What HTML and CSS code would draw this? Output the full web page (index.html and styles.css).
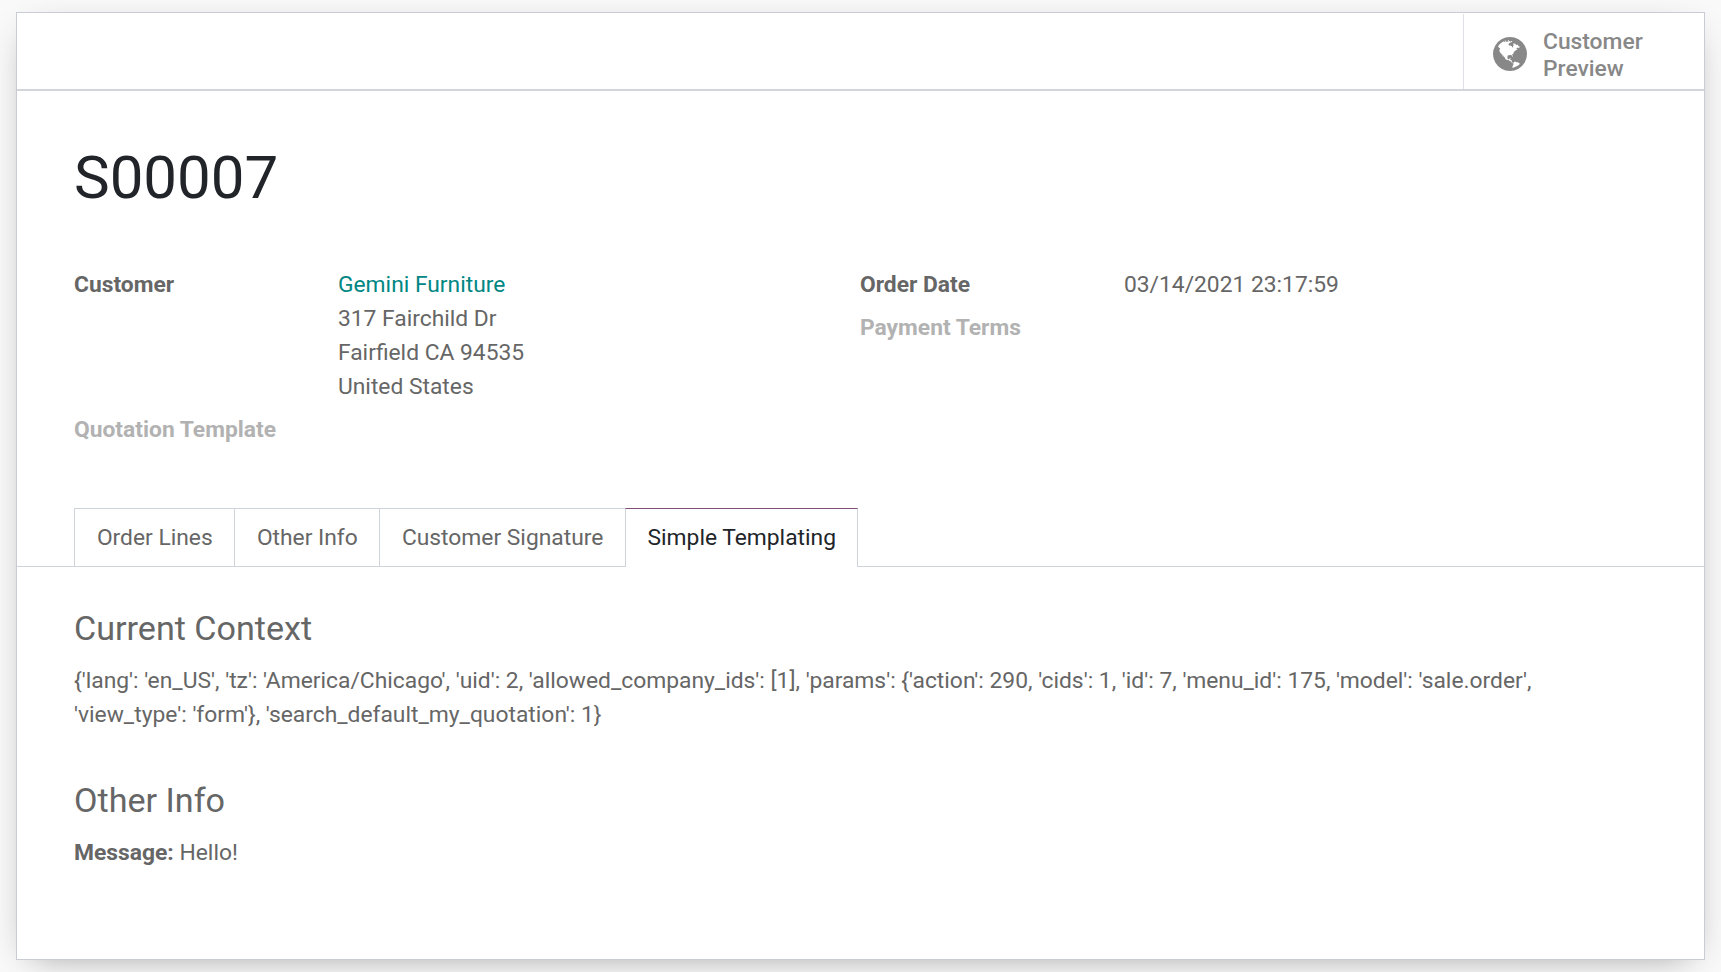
FILE: index.html
```html
<!DOCTYPE html>
<html lang="en">
<head>
<meta charset="utf-8">
<title>S00007</title>
<link rel="stylesheet" href="styles.css">
</head>
<body>
<main class="sheet">
  <div class="button-box">
    <button class="stat-button" type="button">
      <svg class="globe" viewBox="0 128 1536 1536" aria-hidden="true"><path fill="currentColor" d="M768 128q209 0 385.500 103t279.500 279.500 103 385.500-103 385.500-279.500 279.500-385.500 103-385.500-103-279.500-279.500-103-385.500 103-385.500 279.500-279.500 385.500-103zm274 521q-2 1-9.500 9.500t-13.500 9.500q2 0 4.500-5t5-11 3.500-7q6-7 22-15 14-6 52-12 34-8 51 11-2-2 9.500-13t14.500-12q3-2 15-4.500t15-7.500l2-22q-12 1-17.500-7t-6.500-21q0 2-6 8 0-7-4.500-8t-11.500 1-9 1q-10-3-15-7.500t-8-16.500-4-15q-2-5-9.500-11t-9.500-10q-1-2-2.500-5.500t-3-6.500-4-5.500-5.500-2.500-7 5-7.500 10-4.500 5q-3-2-6-1.500t-4.500 1-4.500 3-5 3.500q-3 2-8.500 3t-8.500 2q15-5-1-11-10-4-16-3 9-4 7.500-12t-8.500-14h5q-1-4-8.500-8.500t-17.500-8.500-13-6q-8-5-34-9.500t-33-.5q-5 6-4.500 10.500t4 14 3.500 12.500q1 6-5.500 13t-6.500 12q0 7 14 15.500t10 21.500q-3 8-16 16t-16 12q-5 8-1.500 18.500t10.500 16.500q2 2 1.500 4t-3.500 4.500-5.500 4-6.500 3.500l-3 2q-11 5-20.500-6t-13.500-26q-7-25-16-30-23-8-29 1-5-13-41-26-25-9-58-4 6-1 0-15-7-15-19-12 3-6 4-17.500t1-13.500q3-13 12-23 1-1 7-8.500t9.500-13.500.5-6q35 4 50-11 5-5 11.500-17t10.500-17q9-6 14-5.500t14.500 5.500 14.500 5q14 1 15.500-11t-7.500-20q12 1 3-17-4-7-8-9-12-4-27 5-8 4 2 8-1-1-9.500 10.500t-16.500 17.500-16-5q-1-1-5.500-13.500t-9.500-13.500q-8 0-16 15 3-8-11-15t-24-8q19-12-8-27-7-4-20.500-5t-19.500 4q-5 7-5.500 11.500t5 8 10.500 5.500 11.500 4 8.500 3q14 10 8 14-2 1-8.500 3.500t-11.500 4.500-6 4q-3 4 0 14t-2 14q-5-5-9-17.500t-7-16.500q7 9-25 6l-10-1q-4 0-16 2t-20.500 1-13.500-8q-4-8 0-20 1-4 4-2-4-3-11-9.500t-10-8.500q-46 15-94 41 6 1 12-1 5-2 13-6.500t10-5.500q34-14 42-7l5-5q14 16 20 25-7-4-30-1-20 6-22 12 7 12 5 18-4-3-11.500-10t-14.500-11-15-5q-16 0-22 1-146 80-235 222 7 7 12 8 4 1 5 9t2.500 11 11.500-3q9 8 3 19 1-1 44 27 19 17 21 21 3 11-10 18-1-2-9-9t-9-4q-3 5 .5 18.500t10.500 12.500q-7 0-9.500 16t-2.500 35.500-1 23.500l2 1q-3 12 5.500 34.500t21.500 19.500q-13 3 20 43 6 8 8 9 3 2 12 7.500t15 10 10 10.500q4 5 10 22.500t14 23.500q-2 6 9.500 20t10.500 23q-1 0-2.500 1t-2.500 1q3 7 15.500 14t15.500 13q1 3 2 10t3 11 8 2q2-20-24-62-15-25-17-29-3-5-5.500-15.500t-4.500-14.500q2 0 6 1.500t8.500 3.500 7.500 4 2 3q-3 7 2 17.500t12 18.500 17 19 12 13q6 6 14 19.500t0 13.500q9 0 20 10.500t17 19.500q5 8 8 26t5 24q2 7 8.500 13.500t12.500 9.500l16 8 13 7q5 2 18.500 10.500t21.500 11.500q10 4 16 4t14.500-2.500 13.500-3.500q15-2 29 15t21 21q36 19 55 11-2 1 .5 7.500t8 15.500 9 14.500 5.500 8.500q5 6 18 15t18 15q6-4 7-9-3 8 7 20t18 10q14-3 14-32-31 15-49-18 0-1-2.500-5.500t-4-8.500-2.500-8.500 0-7.500 5-3q9 0 10-3.500t-2-12.500-4-13q-1-8-11-20t-12-15q-5 9-16 8t-16-9q0 1-1.500 5.500t-1.500 6.500q-13 0-15-1 1-3 2.500-17.500t3.500-22.500q1-4 5.500-12t7.500-14.500 4-12.500-4.500-9.500-17.500-2.500q-19 1-26 20-1 3-3 10.500t-5 11.500-9 7q-7 3-24 2t-24-5q-13-8-22.500-29t-9.500-37q0-10 2.500-26.500t3-25-5.500-24.500q3-2 9-9.500t10-10.500q2-1 4.500-1.500t4.500 0 4-1.500 3-6q-1-1-4-3-3-3-4-3 7 3 28.500-1.500t27.500 1.500q15 11 22-2 0-1-2.500-9.500t-.5-13.500q5 27 29 9 3 3 15.500 5t17.500 5q3 2 7 5.500t5.500 4.500 5-.5 8.500-6.500q10 14 12 24 11 40 19 44 7 3 11 2t4.500-9.500 0-14-1.500-12.500l-1-8v-18l-1-8q-15-3-18.500-12t1.500-18.500 15-18.500q1-1 8-3.500t15.500-6.500 12.500-8q21-19 15-35 7 0 11-9-1 0-5-3t-7.500-5-4.500-2q9-5 2-16 5-3 7.500-11t7.500-10q9 12 21 2 8-8 1-16 5-7 20.500-10.500t18.500-9.500q7 2 8-2t1-12 3-12q4-5 15-9t13-5l17-11q3-4 0-4 18 2 31-11 10-11-6-20 3-6-3-9.500t-15-5.500q3-1 11.500-.5t10.500-1.500q15-10-7-16-17-5-43 12zm-163 877q206-36 351-189-3-3-12.500-4.500t-12.500-3.500q-18-7-24-8 1-7-2.500-13t-8-9-12.500-8-11-7q-2-2-7-6t-7-5.500-7.500-4.500-8.500-2-10 1l-3 1q-3 1-5.500 2.500t-5.500 3-4 3 0 2.500q-21-17-36-22-5-1-11-5.500t-10.500-7-10-1.500-11.500 7q-5 5-6 15t-2 13q-7-5 0-17.500t2-18.500q-3-6-10.500-4.500t-12 4.500-11.500 8.500-9 6.500-8.500 5.500-8.500 7.500q-3 4-6 12t-5 11q-2-4-11.500-6.500t-9.500-5.500q2 10 4 35t5 38q7 31-12 48-27 25-29 40-4 22 12 26 0 7-8 20.500t-7 21.500q0 6 2 16z"/></svg>
      <span class="stat-text">Customer<br>Preview</span>
    </button>
  </div>
  <h1 class="title">S00007</h1>
  <div class="groups">
    <dl class="group">
      <dt>Customer</dt>
      <dd><a class="partner">Gemini Furniture</a><br>317 Fairchild Dr<br>Fairfield CA 94535<br>United States</dd>
      <dt class="empty">Quotation Template</dt>
      <dd></dd>
    </dl>
    <dl class="group">
      <dt>Order Date</dt>
      <dd>03/14/2021 23:17:59</dd>
      <dt class="empty">Payment Terms</dt>
      <dd></dd>
    </dl>
  </div>
  <nav class="tabs">
    <a class="tab">Order Lines</a>
    <a class="tab">Other Info</a>
    <a class="tab">Customer Signature</a>
    <a class="tab active">Simple Templating</a>
  </nav>
  <section class="page">
    <h2>Current Context</h2>
    <p>{'lang': 'en_US', 'tz': 'America/Chicago', 'uid': 2, 'allowed_company_ids': [1], 'params': {'action': 290, 'cids': 1, 'id': 7, 'menu_id': 175, 'model': 'sale.order', 'view_type': 'form'}, 'search_default_my_quotation': 1}</p>
    <h2>Other Info</h2>
    <p><b>Message:</b> Hello!</p>
  </section>
</main>
</body>
</html>
```
FILE: styles.css
```css
* { box-sizing: border-box; }

body {
  margin: 0;
  padding: 12px 16px;
  height: 972px;
  overflow: hidden;
  background: #f9f9f9;
  color: #666;
  font: 22.8px/34px Roboto, sans-serif;
}

.sheet {
  height: 948px;
  background: #fff;
  border: 1px solid #c9ccd4;
  box-shadow: 0 9px 35px -16px rgba(0, 0, 0, 0.45);
}

.button-box {
  display: flex;
  justify-content: flex-end;
  height: 78px;
  padding-top: 1px;
  border-bottom: 2px solid #d2d5dc;
}

.stat-button {
  display: flex;
  align-items: center;
  gap: 16.5px;
  width: 241px;
  padding: 7px 0 0 28.5px;
  border: 0;
  border-left: 1px solid #dee0e5;
  background: none;
  color: #888;
  font: 500 22.8px/27px Roboto, sans-serif;
  text-align: left;
}

.globe { width: 34px; height: 34px; margin-top: -2px; }

.title {
  margin: 51px 0 0 57px;
  color: #212529;
  font-size: 60px;
  font-weight: 400;
  line-height: 72px;
}

.groups {
  display: grid;
  grid-template-columns: 786px 1fr;
  height: 230px;
  margin: 54px 57px 0;
}

.group {
  display: grid;
  grid-template-columns: 264px 1fr;
  align-content: start;
  row-gap: 9px;
  margin: 0;
}

dt { font-weight: 700; }
dd { margin: 0; }
.empty { color: #b2b2b2; }
.partner { color: #008784; }

.tabs {
  display: flex;
  height: 59px;
  margin-top: 10px;
  padding-left: 57px;
  border-bottom: 1px solid #ced4da;
}

.tab {
  height: 58px;
  padding: 12px 21.3px 0 21.9px;
  border: solid #ced4da;
  border-width: 1px 0 0 1px;
}

.tab.active {
  height: 59px;
  border-right-width: 1px;
  border-top-color: #7c5079;
  background: #fff;
  color: #212529;
}

.page { padding: 41px 57px 0; }

h2 {
  margin: 0 0 15px;
  font-size: 34.125px;
  font-weight: 400;
  line-height: 41px;
}

p { margin: 0 0 48px; font-size: 22.84px; }
```
